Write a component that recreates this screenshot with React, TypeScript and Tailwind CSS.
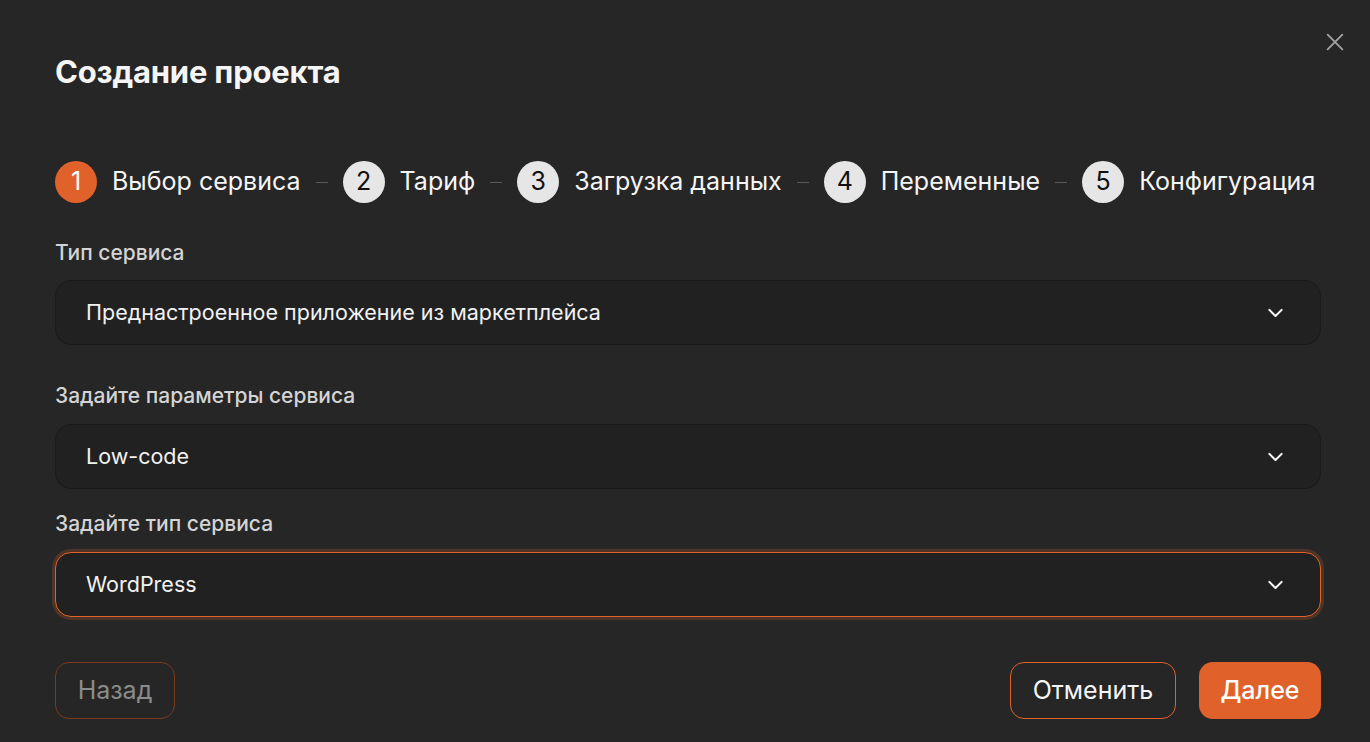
import React from "react";

const steps = ["Выбор сервиса", "Тариф", "Загрузка данных", "Переменные", "Конфигурация"];

function Chevron() {
  return (
    <svg width="21" height="21" viewBox="0 0 24 24" fill="none" stroke="#f5f5f5" strokeWidth="2.4" strokeLinecap="round" strokeLinejoin="round">
      <path d="M5 9l7 7 7-7" />
    </svg>
  );
}

function Select({ value, focused }: { value: string; focused?: boolean }) {
  return (
    <div
      className={
        "flex h-[65px] items-center justify-between rounded-[16px] bg-[#212121] pl-[30px] pr-[34px] " +
        (focused
          ? "border border-[#e0622a] shadow-[0_0_0_3px_rgba(224,98,42,0.22)]"
          : "border border-[#1a1a1a]")
      }
    >
      <span className="text-[21.5px] text-[#f2f2f2]">{value}</span>
      <Chevron />
    </div>
  );
}

export default function App() {
  return (
    <div
      className="relative h-[742px] w-[1370px] overflow-hidden bg-[#262626] pl-[55px] pr-[49px] text-white"
      style={{ fontFamily: "Inter, 'Noto Sans', sans-serif" }}
    >
      <button className="absolute right-[24px] top-[31px] text-[#a3a3a3]">
        <svg width="22" height="22" viewBox="0 0 24 24" fill="none" stroke="currentColor" strokeWidth="2" strokeLinecap="round">
          <path d="M4 4l16 16M20 4L4 20" />
        </svg>
      </button>

      <h1 className="pt-[52px] text-[31px] font-bold leading-[40px] tracking-[-0.2px] text-[#f5f5f5]">Создание проекта</h1>

      <div className="mt-[69px] flex items-center gap-[15px]">
        {steps.map((s, i) => (
          <React.Fragment key={s}>
            {i > 0 && <div className="h-[1px] w-[12px] bg-[#5a5a5a]" />}
            <div className="flex items-center gap-[15px]">
              <div
                className={
                  "flex h-[42px] w-[42px] items-center justify-center rounded-full text-[25px] " +
                  (i === 0 ? "bg-[#e0622a] text-white" : "bg-[#e6e6e6] text-[#111]")
                }
              >
                {i + 1}
              </div>
              <span className="text-[25px] text-[#f5f5f5]">{s}</span>
            </div>
          </React.Fragment>
        ))}
      </div>

      <div className="mt-[38px] text-[21px] font-medium leading-[24px] text-[#d4d4d4]">Тип сервиса</div>
      <div className="mt-[15px]">
        <Select value="Преднастроенное приложение из маркетплейса" />
      </div>

      <div className="mt-[39px] text-[21px] font-medium leading-[24px] text-[#d4d4d4]">Задайте параметры сервиса</div>
      <div className="mt-[16px]">
        <Select value="Low-code" />
      </div>

      <div className="mt-[23px] text-[21px] font-medium leading-[24px] text-[#d4d4d4]">Задайте тип сервиса</div>
      <div className="mt-[16px]">
        <Select value="WordPress" focused />
      </div>

      <div className="mt-[45px] flex items-center justify-between">
        <button className="flex h-[57px] w-[120px] items-center justify-center rounded-[14px] border border-[#7a3a1e] text-[25px] text-[#8c8c8c]">
          Назад
        </button>
        <div className="flex items-center gap-[23px]">
          <button className="flex h-[57px] w-[166px] items-center justify-center rounded-[14px] border border-[#e0622a] text-[25px] text-[#f5f5f5]">
            Отменить
          </button>
          <button className="flex h-[57px] w-[122px] items-center justify-center rounded-[14px] bg-[#e0622a] text-[25px] font-medium text-white">
            Далее
          </button>
        </div>
      </div>
    </div>
  );
}
